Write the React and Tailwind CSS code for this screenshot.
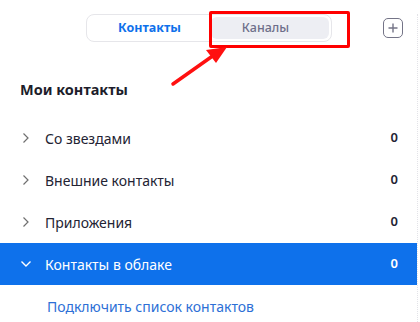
import React from "react";

function ChevronRight() {
  return (
    <svg width="8" height="12" viewBox="0 0 8 12" fill="none" className="shrink-0">
      <path d="M1.5 1.5 L6 6 L1.5 10.5" stroke="#6f6f6f" strokeWidth="1.2" />
    </svg>
  );
}

function ChevronDown() {
  return (
    <svg width="12" height="8" viewBox="0 0 12 8" fill="none" className="shrink-0">
      <path d="M1.5 1.5 L6 6 L10.5 1.5" stroke="#ffffff" strokeWidth="1.4" />
    </svg>
  );
}

function Row({ label, count }) {
  return (
    <div className="flex h-[42px] items-center pl-[22px] pr-[19px]">
      <div className="w-[23px] flex items-center">
        <ChevronRight />
      </div>
      <span className="flex-1 text-[14px] text-[#232333]">{label}</span>
      <span className="text-[13px] font-semibold text-[#232333]">{count}</span>
    </div>
  );
}

export default function App() {
  return (
    <div
      className="relative w-[420px] h-[322px] overflow-hidden bg-white"
      style={{ fontFamily: '"Noto Sans", "Open Sans", sans-serif' }}
    >
      <div className="w-[418px] h-full border-r border-dotted border-[#e3e3e8]">
        <div className="relative flex items-center h-[28px] mt-[14px]">
          <div className="mx-auto flex w-[246px] h-[28px] rounded-lg border border-[#e6e6ea] p-[2px]">
            <div className="flex-1 flex items-center justify-center text-[12.5px] font-bold text-[#0e71eb]">
              Контакты
            </div>
            <div className="w-[118px] flex items-center justify-center pr-[8px] rounded-md bg-[#edeef3] text-[12.5px] font-medium text-[#6e6e8a]">
              Каналы
            </div>
          </div>
          <div className="absolute left-[383px] top-[4px] w-[20px] h-[20px] rounded-[5px] border-[1.5px] border-[#747487] flex items-center justify-center">
            <svg width="10" height="10" viewBox="0 0 10 10">
              <path d="M5 0.5 V9.5 M0.5 5 H9.5" stroke="#747487" strokeWidth="1.4" />
            </svg>
          </div>
        </div>

        <div className="pl-[20px] mt-[37px] h-[38px] text-[14.5px] font-bold text-[#1d1d2b] leading-[20px]">
          Мои контакты
        </div>

        <Row label="Со звездами" count="0" />
        <Row label="Внешние контакты" count="0" />
        <Row label="Приложения" count="0" />

        <div className="flex h-[42px] items-center pl-[20px] pr-[19px] bg-[#0e71eb]">
          <div className="w-[25px] flex items-center">
            <ChevronDown />
          </div>
          <span className="flex-1 text-[14px] text-white">Контакты в облаке</span>
          <span className="text-[13px] font-semibold text-white">0</span>
        </div>

        <div className="flex h-[42px] items-center pl-[47px] text-[14px] text-[#2d6fd6]">
          Подключить список контактов
        </div>
      </div>

      <div className="absolute left-[209px] top-[11px] w-[141px] h-[37px] border-[3px] border-[#ff0000] rounded-[2px]" />
      <svg className="absolute left-0 top-0" width="420" height="322" viewBox="0 0 420 322" fill="none">
        <path d="M173 84 L214 55" stroke="#ff1010" strokeWidth="3.5" strokeLinecap="round" />
        <path d="M227 47 L206 50 L216 63 Z" fill="#ff1010" />
      </svg>
    </div>
  );
}
